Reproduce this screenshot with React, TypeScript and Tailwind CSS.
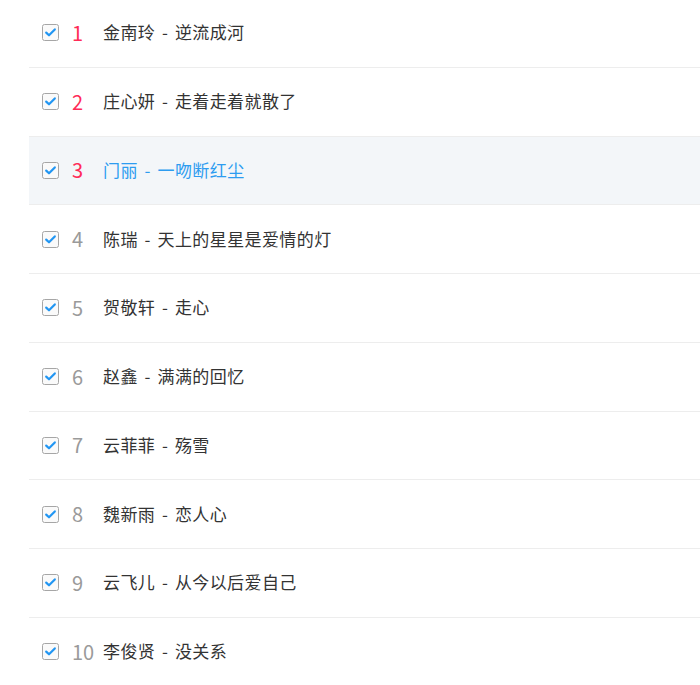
const songs = [
  { singer: "金南玲", title: "逆流成河" },
  { singer: "庄心妍", title: "走着走着就散了" },
  { singer: "门丽", title: "一吻断红尘" },
  { singer: "陈瑞", title: "天上的星星是爱情的灯" },
  { singer: "贺敬轩", title: "走心" },
  { singer: "赵鑫", title: "满满的回忆" },
  { singer: "云菲菲", title: "殇雪" },
  { singer: "魏新雨", title: "恋人心" },
  { singer: "云飞儿", title: "从今以后爱自己" },
  { singer: "李俊贤", title: "没关系" },
];

const ACTIVE = 2;

function CheckBox() {
  return (
    <svg width="17" height="17" viewBox="0 0 17 17" className="shrink-0">
      <rect x="0.5" y="0.5" width="16" height="16" rx="2" fill="#fafafa" stroke="#a6a6a6" />
      <path d="M4.2 8.6 L7 11.3 L12.8 5.4" fill="none" stroke="#2196f3" strokeWidth="2.2" strokeLinecap="round" strokeLinejoin="round" />
    </svg>
  );
}

export default function App() {
  return (
    <div
      className="w-[700px] h-[685px] overflow-hidden bg-white pl-[29px]"
      style={{ fontFamily: '"Noto Sans CJK SC", "Noto Sans", sans-serif' }}
    >
      <ul className="-mt-[1px]">
        {songs.map((s, i) => (
          <li
            key={s.singer}
            className={
              "flex h-[68.75px] items-center border-b border-[#ededed] pl-[13px] " +
              (i === ACTIVE ? "bg-[#f3f6f9]" : "")
            }
          >
            <CheckBox />
            <span
              className={
                "ml-[13px] w-[31px] text-[20px] leading-none " +
                (i < 3 ? "text-[#ff2b57]" : "text-[#9a9a9a]")
              }
            >
              {i + 1}
            </span>
            <span
              className={
                "-mt-[2px] text-[17px] leading-none tracking-[0.4px] [word-spacing:2.5px] " +
                (i === ACTIVE ? "text-[#2d9cf0]" : "text-[#333333]")
              }
            >
              {s.singer} - {s.title}
            </span>
          </li>
        ))}
      </ul>
    </div>
  );
}
